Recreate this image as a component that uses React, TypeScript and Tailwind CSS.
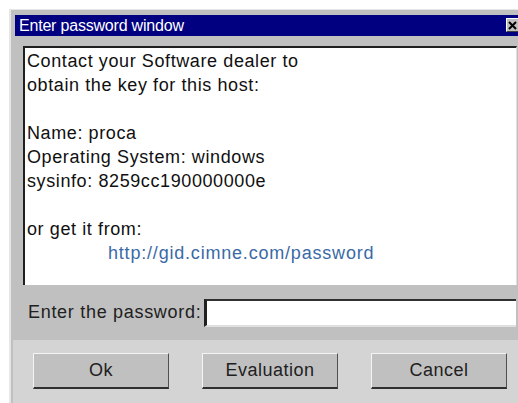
import React from "react";

const font = { fontFamily: '"Liberation Sans", Arial, sans-serif' };

const DialogButton: React.FC<{ label: string }> = ({ label }) => (
  <button
    className="w-[136px] h-[36px] bg-[#c0c0c0] border-t border-l border-t-[#f4f4f4] border-l-[#f4f4f4] border-b-2 border-r border-b-[#303030] border-r-[#505050] text-[18px] tracking-[0.5px] text-[#202020]"
  >
    {label}
  </button>
);

export default function App() {
  return (
    <div
      className="w-[518px] h-[403px] overflow-hidden bg-white pl-[9px] pt-[9px]"
      style={font}
    >
      <div className="w-[520px] h-[400px] flex flex-col bg-[#c0c0c0] border-l-2 border-t border-l-[#e6e6e6] border-t-[#e6e6e6] pl-[4px] pt-[5px]">
        {/* title bar */}
        <div className="h-[21px] bg-[#000080] flex items-center pl-[4px] text-white text-[16px] tracking-[-0.2px] relative">
          <span>Enter password window</span>
          <div className="absolute left-[491px] top-[3px] w-[14px] h-[14px] bg-[#c0c0c0] border-t border-l border-white border-b border-r border-b-[#404040] border-r-[#404040] flex items-center justify-center">
            <svg width="10" height="9" viewBox="0 0 10 9">
              <path d="M1 1 L8 8 M8 1 L1 8" stroke="#000" strokeWidth="2" />
            </svg>
          </div>
        </div>

        {/* message box */}
        <div className="pt-[10px] pl-[8px]">
          <div className="w-[494px] h-[239px] bg-white border-t-2 border-l-2 border-t-[#202020] border-l-[#202020] border-r border-r-[#e0e0e0] pl-[2px] pt-[1px] text-[18px] leading-[24px] tracking-[0.6px] text-[#101010]">
            <div>Contact your Software dealer to</div>
            <div>obtain the key for this host:</div>
            <div>&nbsp;</div>
            <div>Name: proca</div>
            <div>Operating System: windows</div>
            <div>sysinfo: 8259cc190000000e</div>
            <div>&nbsp;</div>
            <div>or get it from:</div>
            <div className="pl-[81px] tracking-[0.8px] text-[#3a6aa6]">http://gid.cimne.com/password</div>
          </div>
        </div>

        {/* password entry */}
        <div className="h-[55px] flex items-center pl-[13px]">
          <span className="w-[176px] text-[18px] tracking-[0.7px] text-[#202020]">Enter the password:</span>
          <div className="w-[312px] h-[28px] bg-white border-t-2 border-l-[3px] border-t-[#303030] border-l-[#202020] border-b-2 border-b-[#e0e0e0]" />
        </div>

        {/* buttons */}
        <div className="flex-1 bg-[#d4d4d4] -ml-[2px] pl-[20px] pt-[13px] flex gap-[33px] items-start">
          <DialogButton label="Ok" />
          <DialogButton label="Evaluation" />
          <DialogButton label="Cancel" />
        </div>
      </div>
    </div>
  );
}
